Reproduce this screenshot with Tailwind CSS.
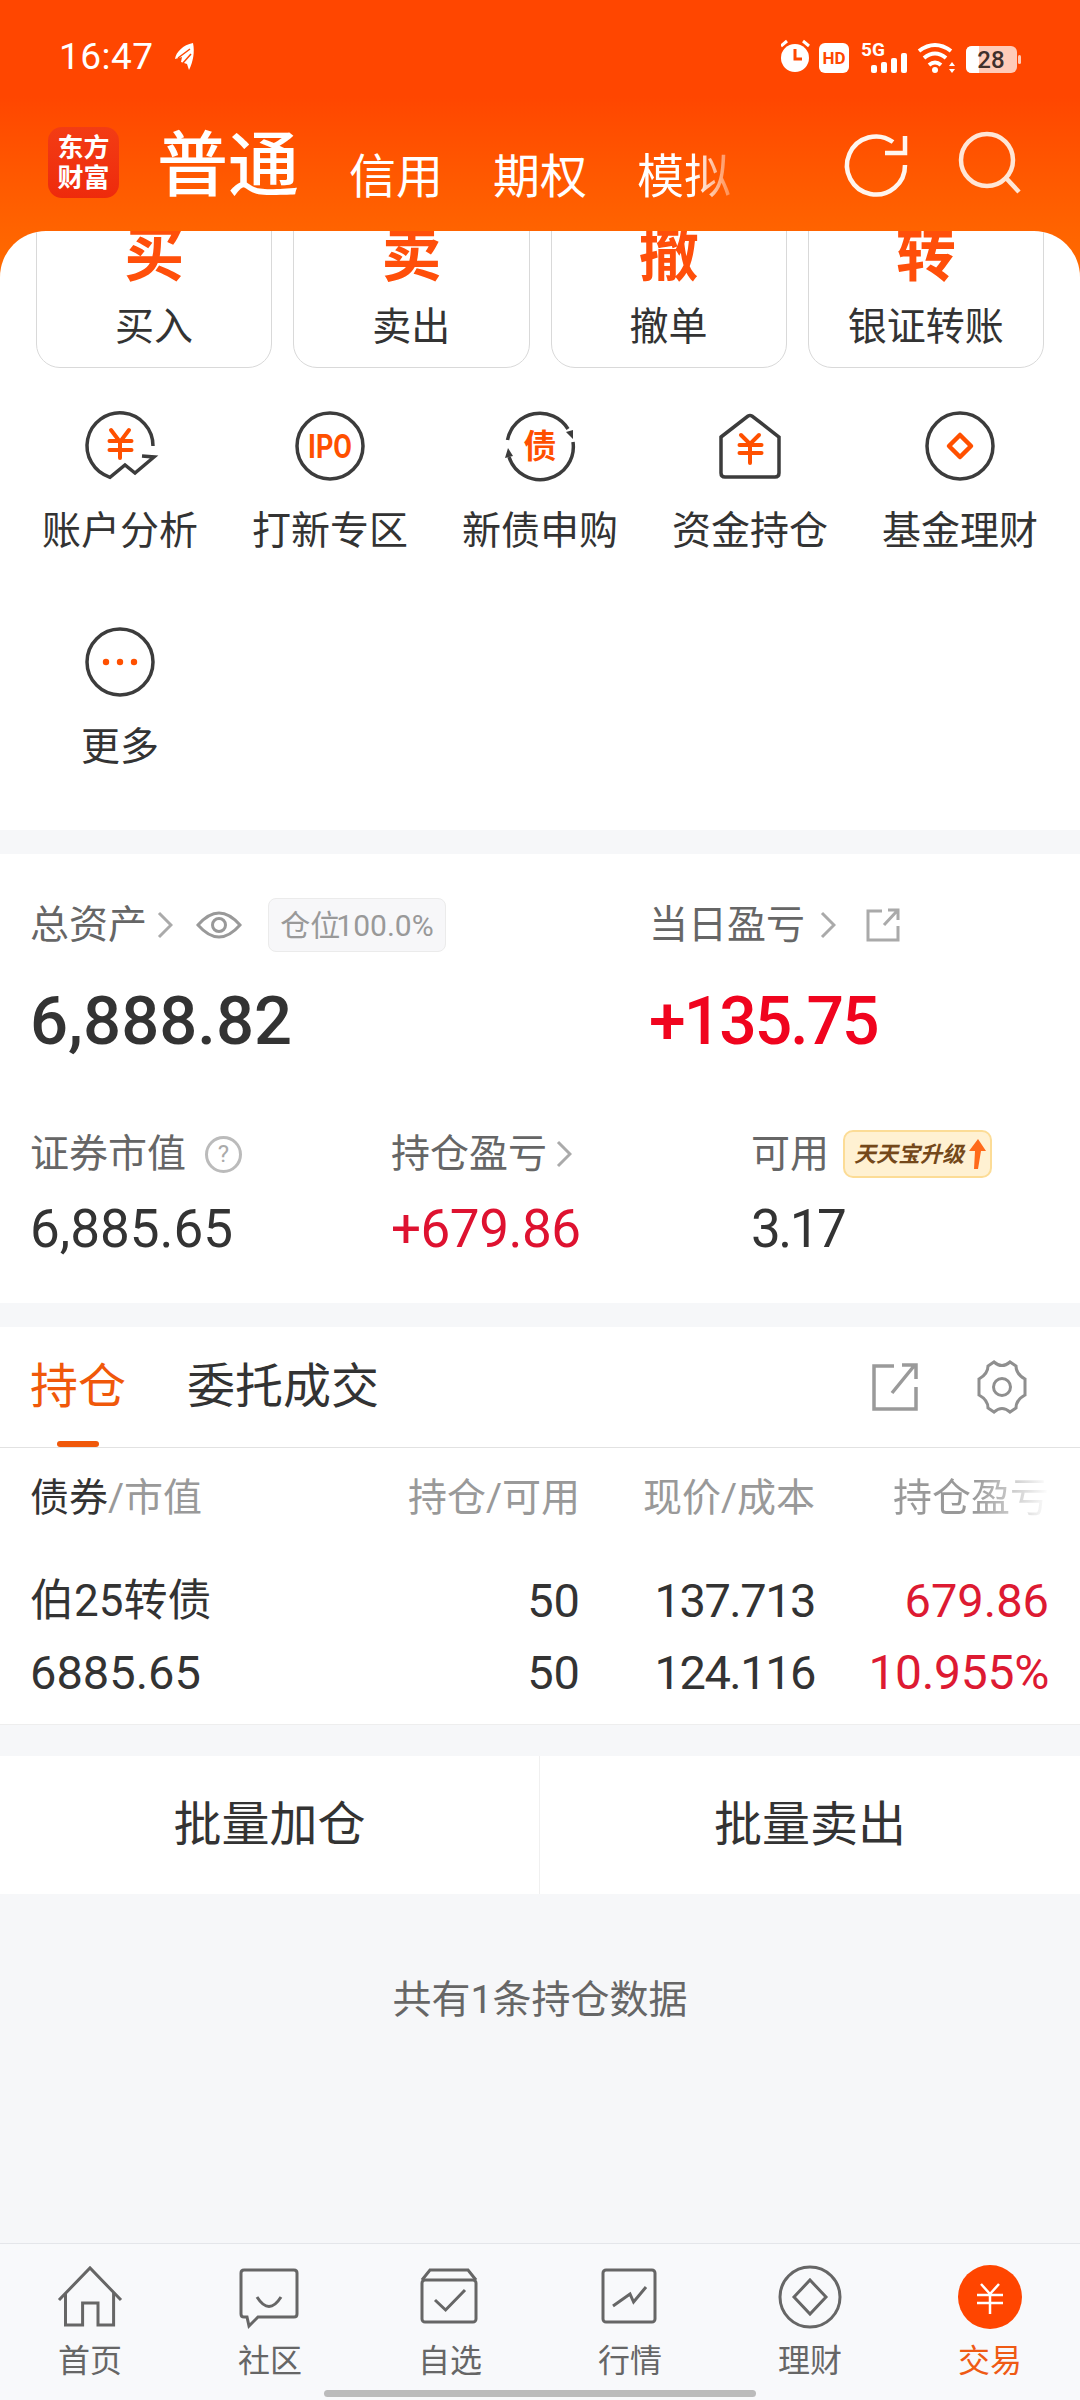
<!DOCTYPE html>
<html lang="zh-CN">
<head>
<meta charset="UTF-8">
<meta name="viewport" content="width=device-width, initial-scale=1.0">
<title>交易</title>
<script src="https://cdn.jsdelivr.net/npm/@tailwindcss/browser@4"></script>
</head>
<body class="font-['Roboto','Noto_Sans_CJK_SC',sans-serif] text-[#333]">
<div class="relative w-[1080px] h-[2400px] flex flex-col overflow-hidden bg-[#f6f7f9]">

  <!-- Header -->
  <header class="h-[277px] shrink-0 bg-gradient-to-b from-[#ff4600] from-[35%] to-[#ff6c00] text-white">
    <div class="h-[114px] flex items-start justify-between pt-[36px] pl-[59px] pr-[59px]">
      <div class="flex items-center gap-[18px]">
        <span class="text-[37px] leading-[42px] tracking-[0.5px]">16:47</span>
        <svg class="w-[24px] h-[34px]" viewBox="0 0 24 34" fill="#fff"><path d="M21 3 C11 5 4 12 3 19 L10 17 L9 22 L15 24 L17 30 C21 22 23 12 21 3Z"/><path d="M6 18 L18 9 M11 23 L19 14" stroke="#ff4700" stroke-width="1.5"/></svg>
      </div>
      <svg class="w-[240px] h-[40px]" viewBox="0 0 240 40">
        <circle cx="14" cy="22" r="14" fill="#fff"/>
        <path d="M14 13 V23 H21" stroke="#ff4700" stroke-width="3" fill="none"/>
        <path d="M0 10 L6 5 M28 10 L22 5" stroke="#fff" stroke-width="3"/>
        <rect x="38" y="7" width="30" height="30" rx="6" fill="#fff"/>
        <text x="53" y="28" text-anchor="middle" font-size="17" font-weight="700" font-family="Roboto" fill="#ff4700">HD</text>
        <text x="80" y="20" font-size="19" font-weight="700" font-family="Roboto" fill="#fff">5G</text>
        <rect x="90" y="29" width="6" height="8" rx="2" fill="#fff"/>
        <rect x="100" y="26" width="6" height="11" rx="2" fill="#fff"/>
        <rect x="110" y="22" width="6" height="15" rx="2" fill="#fff"/>
        <rect x="120" y="17" width="6" height="20" rx="2" fill="#fff"/>
        <path d="M138 15 Q154 3 170 15 M143 22 Q154 13 165 22 M148 29 Q154 24 160 29" stroke="#fff" stroke-width="4" fill="none"/>
        <circle cx="154" cy="34" r="3" fill="#fff"/>
        <path d="M171 26 L174 30 H168Z M168 33 H174 L171 37Z" fill="#fff"/>
        <rect x="185" y="10" width="51" height="27" rx="6" fill="#fff" fill-opacity="0.72"/>
        <rect x="237" y="19" width="3" height="9" rx="1.5" fill="#fff" fill-opacity="0.72"/>
        <path d="M191 10 H198 V37 H191 Q185 37 185 31 V16 Q185 10 191 10Z" fill="#fff"/>
        <text x="210" y="32" text-anchor="middle" font-size="24" font-weight="500" font-family="Roboto" fill="#40302c">28</text>
      </svg>
    </div>
    <div class="h-[117px] relative flex items-start">
      <div class="ml-[48px] mt-[13px] w-[71px] h-[71px] rounded-[14px] bg-gradient-to-b from-[#f33c14] to-[#ee2a0c] flex flex-col items-center justify-center text-[26px] leading-[30px] font-bold">
        <span>东方</span><span>财富</span>
      </div>
      <span class="ml-[38px] mt-[13px] text-[71px] leading-[78px] font-medium">普通</span>
      <span class="ml-[50px] mt-[36px] text-[47px] leading-[54px]">信用</span>
      <span class="ml-[50px] mt-[36px] text-[47px] leading-[54px]">期权</span>
      <span class="ml-[50px] mt-[36px] text-[47px] leading-[54px] bg-gradient-to-r from-white from-[60%] to-white/30 bg-clip-text text-transparent">模拟</span>
      <svg class="absolute left-[840px] top-[14px] w-[72px] h-[72px]" viewBox="0 0 72 72" fill="none" stroke="#fff5ee" stroke-width="4.5">
        <path d="M65 37 A29 29 0 1 1 53 14"/>
        <path d="M45 25 H65 V8"/>
      </svg>
      <svg class="absolute left-[950px] top-[10px] w-[76px] h-[76px]" viewBox="0 0 76 76" fill="none" stroke="#ffe6d6" stroke-width="4.5">
        <circle cx="37" cy="36" r="26"/>
        <path d="M56 54 L69 68"/>
      </svg>
    </div>
  </header>

  <!-- Quick actions -->
  <section class="-mt-[46px] h-[599px] shrink-0 bg-white rounded-t-[46px] overflow-hidden relative">
    <div class="-mt-[33px] px-[36px] grid grid-cols-4 gap-[21px] text-center">
      <div class="h-[170px] border border-[#d9d9d9] rounded-[24px] flex flex-col items-center pt-[27px]">
        <span class="text-[60px] leading-[60px] font-bold text-[#ff4f0a]">买</span>
        <span class="mt-[18px] text-[39px] leading-[46px]">买入</span>
      </div>
      <div class="h-[170px] border border-[#d9d9d9] rounded-[24px] flex flex-col items-center pt-[27px]">
        <span class="text-[60px] leading-[60px] font-bold text-[#ff4f0a]">卖</span>
        <span class="mt-[18px] text-[39px] leading-[46px]">卖出</span>
      </div>
      <div class="h-[170px] border border-[#d9d9d9] rounded-[24px] flex flex-col items-center pt-[27px]">
        <span class="text-[60px] leading-[60px] font-bold text-[#ff4f0a]">撤</span>
        <span class="mt-[18px] text-[39px] leading-[46px]">撤单</span>
      </div>
      <div class="h-[170px] border border-[#d9d9d9] rounded-[24px] flex flex-col items-center pt-[27px]">
        <span class="text-[60px] leading-[60px] font-bold text-[#ff4f0a]">转</span>
        <span class="mt-[18px] text-[39px] leading-[46px]">银证转账</span>
      </div>
    </div>

    <div class="mt-[38px] px-[15px] grid grid-cols-5 gap-y-[67px] text-center text-[39px] leading-[48px]">
      <div class="flex flex-col items-center">
        <svg class="w-[80px] h-[80px]" viewBox="0 0 80 80" fill="none">
          <path d="M73 40 A33 33 0 1 0 30 71.3 L45 59 L55 67 L74 51 L62 50" stroke="#3c3c3c" stroke-width="3.5"/>
          <path d="M31 24 L40 36 L49 24 M29.5 35 H51.5 M29.5 44 H51.5 M40 35 V52" stroke="#ff5000" stroke-width="4" stroke-linecap="round"/>
        </svg>
        <span class="mt-[21px]">账户分析</span>
      </div>
      <div class="flex flex-col items-center">
        <svg class="w-[80px] h-[80px]" viewBox="0 0 80 80" fill="none">
          <circle cx="40" cy="40" r="33" stroke="#3c3c3c" stroke-width="3.5"/>
          <text x="40" y="52" text-anchor="middle" font-size="33" font-weight="700" font-family="Roboto" fill="#ff5000" textLength="44" lengthAdjust="spacingAndGlyphs">IPO</text>
        </svg>
        <span class="mt-[21px]">打新专区</span>
      </div>
      <div class="flex flex-col items-center">
        <svg class="w-[80px] h-[80px]" viewBox="0 0 80 80" fill="none">
          <path d="M7.5 34 A33 33 0 0 1 68 23" stroke="#3c3c3c" stroke-width="3.5"/>
          <path d="M73 36 A33 33 0 0 1 9 51" stroke="#3c3c3c" stroke-width="3.5"/>
          <path d="M66 26 L73 24 L73 33Z M5 52 L13 50 L8 42Z" fill="#3c3c3c"/>
          <text x="40" y="52" text-anchor="middle" font-size="33" font-weight="700" font-family="Noto Sans CJK SC" fill="#ff5000">债</text>
        </svg>
        <span class="mt-[21px]">新债申购</span>
      </div>
      <div class="flex flex-col items-center">
        <svg class="w-[80px] h-[80px]" viewBox="0 0 80 80" fill="none">
          <path d="M11 31 L38 10 Q40 9 42 10 L69 31 V67 Q69 71 65 71 H15 Q11 71 11 67Z" stroke="#3c3c3c" stroke-width="3.5"/>
          <path d="M31 29 L40 38 L49 29 M29.5 39 H51.5 M29.5 47 H51.5 M40 38 V57" stroke="#ff5000" stroke-width="4" stroke-linecap="round"/>
        </svg>
        <span class="mt-[21px]">资金持仓</span>
      </div>
      <div class="flex flex-col items-center">
        <svg class="w-[80px] h-[80px]" viewBox="0 0 80 80" fill="none">
          <circle cx="40" cy="40" r="33" stroke="#3c3c3c" stroke-width="3.5"/>
          <path d="M40 29 L51 40 L40 51 L29 40Z" stroke="#ff5000" stroke-width="4.5" stroke-linejoin="round"/>
        </svg>
        <span class="mt-[21px]">基金理财</span>
      </div>
      <div class="flex flex-col items-center">
        <svg class="w-[80px] h-[80px]" viewBox="0 0 80 80" fill="none">
          <circle cx="40" cy="40" r="33" stroke="#3c3c3c" stroke-width="3.5"/>
          <circle cx="26" cy="40" r="3.2" fill="#ff5000"/>
          <circle cx="40" cy="40" r="3.2" fill="#ff5000"/>
          <circle cx="54" cy="40" r="3.2" fill="#ff5000"/>
        </svg>
        <span class="mt-[21px]">更多</span>
      </div>
    </div>
  </section>

  <!-- Assets -->
  <section class="mt-[24px] h-[449px] shrink-0 bg-white pt-[44px]">
    <div class="grid grid-cols-[619px_1fr] pl-[30px]">
      <div class="h-[54px] flex items-center text-[39px] text-[#666]">
        <span>总资产</span>
        <svg class="ml-[10px] w-[16px] h-[30px]" viewBox="0 0 16 30" fill="none" stroke="#aaa" stroke-width="3"><path d="M2 3 L14 15 L2 27"/></svg>
        <svg class="ml-[23px] w-[46px] h-[32px]" viewBox="0 0 46 32" fill="none" stroke="#999" stroke-width="3"><path d="M2 16 Q23 -8 44 16 Q23 40 2 16Z"/><circle cx="23" cy="16" r="6.5"/></svg>
        <span class="ml-[26px] h-[54px] w-[178px] bg-[#f7f7f9] border border-[#ebebeb] rounded-[8px] flex items-center justify-center text-[30px] text-[#999]">仓位<span class="-ml-[4px]">100.0%</span></span>
      </div>
      <div class="h-[54px] flex items-center text-[39px] text-[#666]">
        <span>当日盈亏</span>
        <svg class="ml-[15px] w-[16px] h-[30px]" viewBox="0 0 16 30" fill="none" stroke="#aaa" stroke-width="3"><path d="M2 3 L14 15 L2 27"/></svg>
        <svg class="ml-[30px] w-[34px] h-[34px]" viewBox="0 0 34 34" fill="none" stroke="#aaa" stroke-width="3"><path d="M16 3 H2 V32 H32 V18 M18 17 L31 3 M22 2 H32 V12"/></svg>
      </div>
      <div class="mt-[29px] h-[80px] flex items-center text-[67px] font-medium text-[#333]">6,888.82</div>
      <div class="mt-[29px] h-[80px] flex items-center text-[66px] font-medium tracking-[-2px] text-[#f0041e]">+135.75</div>
    </div>
    <div class="mt-[69px] grid grid-cols-[361px_360px_1fr] pl-[30px]">
      <div class="h-[48px] flex items-center text-[39px] text-[#666]">
        <span>证券市值</span>
        <span class="ml-[19px] w-[37px] h-[37px] rounded-full border-[3px] border-[#bbb] flex items-center justify-center text-[24px] text-[#aaa]">?</span>
      </div>
      <div class="h-[48px] flex items-center text-[39px] text-[#666]">
        <span>持仓盈亏</span>
        <svg class="ml-[9px] w-[16px] h-[30px]" viewBox="0 0 16 30" fill="none" stroke="#aaa" stroke-width="3"><path d="M2 3 L14 15 L2 27"/></svg>
      </div>
      <div class="h-[48px] flex items-center text-[39px] text-[#666]">
        <span>可用</span>
        <span class="ml-[14px] w-[149px] h-[48px] rounded-[10px] bg-[#fff1d2] border-2 border-[#fcdc96] flex items-center pl-[9px] text-[22px] font-bold italic text-[#74481a] whitespace-nowrap">
          天天宝升级
          <svg class="ml-[4px] shrink-0 w-[18px] h-[32px]" viewBox="0 0 18 32" fill="#ff6a1a"><path d="M10 1 L18 13 H13 L10 31 H6 L7 13 H1Z"/></svg>
        </span>
      </div>
      <div class="mt-[22px] h-[60px] flex items-center text-[53px] text-[#333]">6,885.65</div>
      <div class="mt-[22px] h-[60px] flex items-center text-[53px] tracking-[-0.5px] text-[#de1230]">+679.86</div>
      <div class="mt-[22px] h-[60px] flex items-center text-[53px] tracking-[-2.5px] text-[#333]">3.17</div>
    </div>
  </section>

  <!-- Positions -->
  <section class="mt-[24px] shrink-0 bg-white border-b border-[#eeeeee]">
    <div class="relative h-[121px] pl-[30px] pr-[50px] flex items-center border-b border-[#e2e2e2]">
      <span class="text-[48px] text-[#f0580a]">持仓</span>
      <span class="ml-[61px] text-[48px] text-[#333]">委托成交</span>
      <span class="absolute left-[57px] bottom-0 w-[42px] h-[6px] rounded-full bg-[#f0580a]"></span>
      <svg class="ml-auto w-[46px] h-[48px]" viewBox="0 0 46 48" fill="none" stroke="#9a9a9a" stroke-width="3.5"><path d="M22 3 H2 V46 H44 V24 M20 30 L42 3 M30 2 H44 V16"/></svg>
      <svg class="ml-[56px] w-[56px] h-[56px]" viewBox="0 0 56 56" fill="none" stroke="#8f8f8f" stroke-width="3"><path d="M20 3 Q28 10 36 3 L42 7 Q42 15 51 20 L51 36 Q42 41 42 49 L36 53 Q28 46 20 53 L14 49 Q14 41 5 36 L5 20 Q14 15 14 7Z"/><circle cx="28" cy="28" r="8.5"/></svg>
    </div>
    <div class="h-[100px] px-[30px] grid grid-cols-[301px_249px_235px_234px] items-center text-[39px] text-[#999]">
      <span class="whitespace-nowrap"><span class="text-[#333]">债券</span>/市值</span>
      <span class="text-right">持仓/可用</span>
      <span class="text-right">现价/成本</span>
      <span class="text-right bg-gradient-to-r from-[#999] from-[68%] to-white bg-clip-text text-transparent">持仓盈亏</span>
    </div>
    <div class="mt-[17px] pb-[15px] px-[30px] grid grid-cols-[301px_249px_235px_234px] auto-rows-[72px] items-center text-[47px] text-[#333]">
      <span class="text-[44px]">伯25转债</span>
      <span class="text-right">50</span>
      <span class="text-right tracking-[-1.5px]">137.713</span>
      <span class="text-right text-[#dd1a32]">679.86</span>
      <span>6885.65</span>
      <span class="text-right">50</span>
      <span class="text-right tracking-[-1.5px]">124.116</span>
      <span class="text-right text-[48px] tracking-[-0.3px] text-[#dd1a32]">10.955%</span>
    </div>
  </section>

  <!-- Batch actions -->
  <div class="mt-[31px] h-[138px] shrink-0 bg-white grid grid-cols-2 text-[48px] text-[#333]">
    <div class="flex items-center justify-center border-r border-[#f0f0f0]">批量加仓</div>
    <div class="flex items-center justify-center">批量卖出</div>
  </div>
  <div class="mt-[82px] h-[48px] shrink-0 flex items-center justify-center text-[39px] text-[#666]">共有1条持仓数据</div>

  <!-- Bottom nav -->
  <nav class="mt-auto h-[157px] shrink-0 border-t border-[#e4e6ea] bg-[#f8f9fb] pt-[18px] grid grid-cols-6 text-center text-[32px] leading-[40px] text-[#666]">
    <div class="flex flex-col items-center">
      <svg class="w-[80px] h-[70px]" viewBox="0 0 80 70" fill="none" stroke="#666" stroke-width="3"><path d="M9 38 L40 6 L71 38"/><path d="M15.5 31 V63 H32.6 V41 H48 V63 H63.6 V31"/></svg>
      <span class="mt-[9px]">首页</span>
    </div>
    <div class="flex flex-col items-center">
      <svg class="w-[80px] h-[70px]" viewBox="0 0 80 70" fill="none" stroke="#666" stroke-width="3"><path d="M14 8 H64 Q67 8 67 11 V52 Q67 55 64 55 H28 L19 64 L17 55 H14 Q11 55 11 52 V11 Q11 8 14 8Z"/><path d="M27 35 Q39 54 51 35"/></svg>
      <span class="mt-[9px]">社区</span>
    </div>
    <div class="flex flex-col items-center">
      <svg class="w-[80px] h-[70px]" viewBox="0 0 80 70" fill="none" stroke="#666" stroke-width="3"><path d="M12 18 L20 8 H58 L66 18"/><rect x="12" y="18" width="54" height="42" rx="3"/><path d="M25 38 L35.6 48 L55 28"/></svg>
      <span class="mt-[9px]">自选</span>
    </div>
    <div class="flex flex-col items-center">
      <svg class="w-[80px] h-[70px]" viewBox="0 0 80 70" fill="none" stroke="#666" stroke-width="3"><rect x="13" y="8" width="52" height="52" rx="3"/><path d="M23 44 L40 32 L43.6 40 L56 25"/></svg>
      <span class="mt-[9px]">行情</span>
    </div>
    <div class="flex flex-col items-center">
      <svg class="w-[80px] h-[70px]" viewBox="0 0 80 70" fill="none" stroke="#666" stroke-width="3"><circle cx="40" cy="35" r="30"/><path d="M40 18 L56 35 L40 52 L24 35Z"/></svg>
      <span class="mt-[9px]">理财</span>
    </div>
    <div class="flex flex-col items-center text-[#ef5a14]">
      <svg class="w-[80px] h-[70px]" viewBox="0 0 80 70" fill="none"><circle cx="40" cy="35" r="32" fill="#ff4500"/><path d="M31 22 L40 32 L49 22 M27 33 H53 M27 41 H53 M40 32 V52" stroke="#fff" stroke-width="2.5"/></svg>
      <span class="mt-[9px]">交易</span>
    </div>
  </nav>
  <div class="absolute left-[324px] bottom-[3px] w-[432px] h-[7px] rounded-full bg-[#bbbbbb]"></div>
</div>
</body>
</html>
